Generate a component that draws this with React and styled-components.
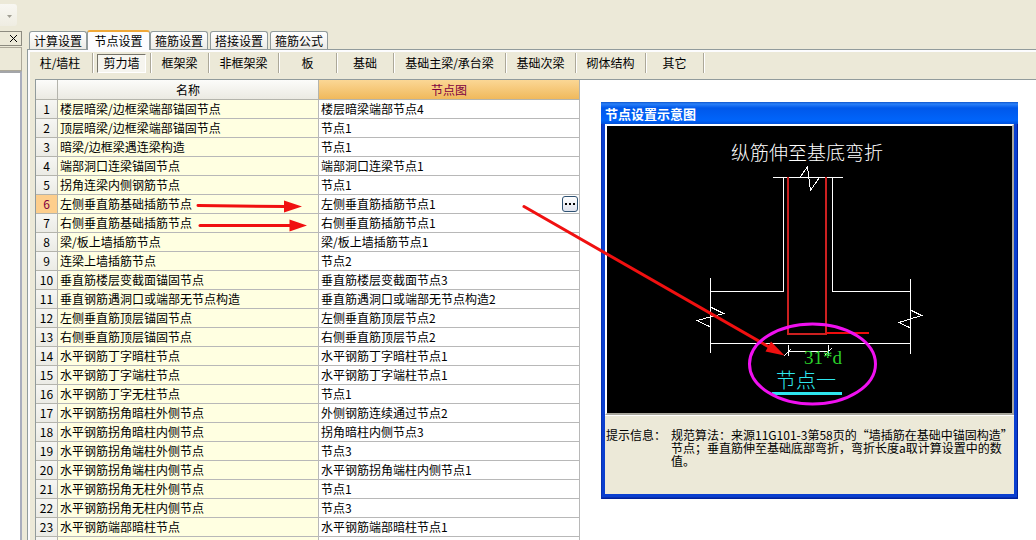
import { useState } from "react";
import styled, { createGlobalStyle } from "styled-components";

const GlobalStyle = createGlobalStyle`
  * {
    box-sizing: border-box;
  }

  body {
    margin: 0;
    background: #ece9d8;
    color: #000;
    font-family: "Noto Sans CJK SC", "Liberation Sans", sans-serif;
    font-size: 12px;
    line-height: 16px;
  }

  button {
    font: inherit;
    color: inherit;
    cursor: pointer;
  }
`;

const Page = styled.div`
  position: relative;
  display: flex;
  height: 100vh;
  overflow: hidden;
`;

const Dock = styled.aside`
  display: flex;
  flex-direction: column;
  flex: none;
  width: 22px;
`;

const ToolbarEnd = styled.button`
  width: 17px;
  height: 22px;
  margin: 4px 0 5px;
  padding: 0;
  border: none;
  border-radius: 0 3px 3px 0;
  background: linear-gradient(#f8f7f2, #efede2);
  line-height: 0;
`;

const DockTitle = styled.div`
  display: flex;
  justify-content: flex-end;
  align-items: center;
  height: 15px;
  border: 1px solid #8d8b80;
  border-left: none;
`;

const CloseButton = styled.button`
  display: flex;
  padding: 0 3px;
  border: none;
  background: none;
`;

const DockBar = styled.div`
  height: 24px;
  margin-top: 1px;
  border: 1px solid #aca899;
  border-left: none;
`;

const DockBody = styled.div`
  flex: 1;
  border-top: 2px solid #a3a5a9;
  border-right: 2px solid #a9adbd;
  background: #fff;
`;

const Main = styled.main`
  display: flex;
  flex-direction: column;
  flex: 1;
  min-width: 0;
  padding: 30px 0 0 5px;
`;

const TabBar = styled.div`
  display: flex;
  align-items: flex-end;
  height: 20px;
  padding-left: 2px;
  box-shadow: inset 0 -1px #919b9c;
`;

const Tab = styled.button`
  width: ${({ $active }) => ($active ? "63px" : "58px")};
  height: ${({ $active }) => ($active ? "20px" : "18px")};
  margin-bottom: ${({ $active }) => ($active ? "0" : "1px")};
  margin-right: ${({ $joined }) => ($joined ? "0" : "2px")};
  padding: 0;
  border: 1px solid #919b9c;
  border-top: ${({ $active }) => ($active ? "2px solid #f0a838" : "1px solid #919b9c")};
  border-bottom: none;
  border-radius: 3px 3px 0 0;
  background: ${({ $active }) => ($active ? "#fcfcfe" : "linear-gradient(#fff, #ecebe6)")};
  line-height: 16px;
  white-space: nowrap;
`;

const TabPanel = styled.section`
  display: flex;
  flex-direction: column;
  flex: 1;
  min-height: 0;
  border-left: 1px solid #919b9c;
  box-shadow: inset 2px 2px #fcfcfe;
`;

const SubTabBar = styled.div`
  display: flex;
  height: 29px;
  padding-top: 3px;
`;

const SubTabCell = styled.div`
  display: flex;
  justify-content: center;
  align-items: center;
  flex: none;
  width: ${({ $width }) => $width}px;
  height: 20px;
  border-right: 1px solid #aca899;
  box-shadow: 1px 0 #fff;
`;

const SubTab = styled.button`
  height: 19px;
  padding: 0 5px 2px;
  border: 1px solid;
  border-color: ${({ $active }) => ($active ? "#76746a #fff #fff #76746a" : "transparent")};
  background: ${({ $active }) => ($active ? "#f6f5ef" : "none")};
  line-height: 15px;
  white-space: nowrap;
`;

const Canvas = styled.div`
  display: flex;
  align-items: flex-start;
  flex: 1;
  min-height: 0;
  margin-left: 7px;
  border: solid #919b9c;
  border-width: 1px 0 0 1px;
  background: #fff;
  overflow: hidden;
`;

const Grid = styled.table`
  flex: none;
  width: 544px;
  border-collapse: separate;
  border-spacing: 0;
  table-layout: fixed;
`;

const HeadCell = styled.th`
  width: ${({ $width }) => $width}px;
  height: 20px;
  padding: 0;
  border: solid #b4b4ac;
  border-width: 0 1px 1px 0;
  background: ${({ $active }) =>
    $active ? "linear-gradient(#fbd795, #f0b95c)" : "linear-gradient(#fcfcfa, #ebeae2)"};
  color: ${({ $active }) => ($active ? "#800040" : "#000")};
  font-weight: 400;
`;

const NumberCell = styled.th`
  height: 19px;
  padding: 0;
  border: solid #b4b4ac;
  border-width: 0 1px 1px 0;
  background: ${({ $active }) => ($active ? "#fdce8c" : "linear-gradient(#f6f6f3, #ebebe5)")};
  color: ${({ $active }) => ($active ? "#800040" : "#000")};
  font-weight: 400;
`;

const Cell = styled.td`
  height: 19px;
  padding: 0 1px 0 2px;
  border: solid #b8b8b8;
  border-width: 0 1px 1px 0;
  background: ${({ $tinted }) => ($tinted ? "#ffffe1" : "#fff")};
  white-space: nowrap;
`;

const CellContent = styled.div`
  display: flex;
  justify-content: space-between;
  align-items: center;
  height: 18px;
`;

const MoreButton = styled.button`
  display: flex;
  justify-content: center;
  align-items: center;
  width: 16px;
  height: 16px;
  padding: 0;
  border: 1px solid #2f5273;
  border-radius: 3px;
  background: linear-gradient(#fff, #dfe3ee);
`;

const Dialog = styled.section`
  flex: none;
  width: 417px;
  margin: 22px 0 0 21px;
  padding: 0 4px 5px;
  border-radius: 1px;
  background: #0a3fd0;
  box-shadow: inset 1px 0 #0831b0, inset -1px -1px #00209a, inset 0 -2px #0831b0;
`;

const DialogTitle = styled.h2`
  height: 22px;
  margin: 0 -4px;
  padding: 0 4px;
  background: linear-gradient(#0f56cc, #2a80f8 2px, #0058ea 6px, #0064fa 18px, #0050dc);
  color: #fff;
  font-size: 13px;
  font-weight: 700;
  line-height: 23px;
`;

const DiagramFrame = styled.div`
  height: 291px;
  border: 2px solid #fff;
  border-right-color: #a8a69c;
  border-bottom-color: #a8a69c;
  background: #000;

  svg {
    display: block;
  }
`;

const Hint = styled.dl`
  display: flex;
  height: 79px;
  margin: 0;
  padding: 12px 0 0 1px;
  border-top: 1px solid #fff;
  background: #ece9d8;
  line-height: 13px;
  white-space: nowrap;

  dt {
    flex: none;
    width: 65px;
  }

  dd {
    margin: 0;
  }
`;

const Annotations = styled.svg`
  position: absolute;
  top: 0;
  left: 0;
  pointer-events: none;
`;

const tabs = ["计算设置", "节点设置", "箍筋设置", "搭接设置", "箍筋公式"];

const subTabs = [
  { label: "柱/墙柱", width: 65 },
  { label: "剪力墙", width: 58 },
  { label: "框架梁", width: 58 },
  { label: "非框架梁", width: 70 },
  { label: "板", width: 58 },
  { label: "基础", width: 57 },
  { label: "基础主梁/承台梁", width: 112 },
  { label: "基础次梁", width: 70 },
  { label: "砌体结构", width: 70 },
  { label: "其它", width: 58 },
];

const rows = [
  ["楼层暗梁/边框梁端部锚固节点", "楼层暗梁端部节点4"],
  ["顶层暗梁/边框梁端部锚固节点", "节点1"],
  ["暗梁/边框梁遇连梁构造", "节点1"],
  ["端部洞口连梁锚固节点", "端部洞口连梁节点1"],
  ["拐角连梁内侧钢筋节点", "节点1"],
  ["左侧垂直筋基础插筋节点", "左侧垂直筋插筋节点1"],
  ["右侧垂直筋基础插筋节点", "右侧垂直筋插筋节点1"],
  ["梁/板上墙插筋节点", "梁/板上墙插筋节点1"],
  ["连梁上墙插筋节点", "节点2"],
  ["垂直筋楼层变截面锚固节点", "垂直筋楼层变截面节点3"],
  ["垂直钢筋遇洞口或端部无节点构造", "垂直筋遇洞口或端部无节点构造2"],
  ["左侧垂直筋顶层锚固节点", "左侧垂直筋顶层节点2"],
  ["右侧垂直筋顶层锚固节点", "右侧垂直筋顶层节点2"],
  ["水平钢筋丁字暗柱节点", "水平钢筋丁字暗柱节点1"],
  ["水平钢筋丁字端柱节点", "水平钢筋丁字端柱节点1"],
  ["水平钢筋丁字无柱节点", "节点1"],
  ["水平钢筋拐角暗柱外侧节点", "外侧钢筋连续通过节点2"],
  ["水平钢筋拐角暗柱内侧节点", "拐角暗柱内侧节点3"],
  ["水平钢筋拐角端柱外侧节点", "节点3"],
  ["水平钢筋拐角端柱内侧节点", "水平钢筋拐角端柱内侧节点1"],
  ["水平钢筋拐角无柱外侧节点", "节点1"],
  ["水平钢筋拐角无柱内侧节点", "节点3"],
  ["水平钢筋端部暗柱节点", "水平钢筋端部暗柱节点1"],
  ["", ""],
];

const NodeDiagram = () => (
  <svg width="405" height="287" viewBox="0 0 405 287" role="img" aria-label="节点一">
    <text x="124" y="34" fill="#fff" fontSize="19" fontWeight="300">纵筋伸至基底弯折</text>
    <g fill="none" stroke="#fff" shapeRendering="crispEdges">
      <path d="M166 51.5H236" />
      <path d="M193 51.5L200.5 40.5L203.5 64.5L212 52" />
      <path d="M176.5 51V165.5H103" />
      <path d="M225.5 51V165.5H303" />
      <path d="M103.5 152V227M303.5 153V228M103 217.5H304" />
      <path d="M103.5 181L116.5 187.5L90 194.5L103.5 201" />
      <path d="M303.5 184L314.5 189.5L292 196.5L303.5 202" />
      <path d="M181.5 219V230M221.5 219V230M181 225.5H222M177 230L184 223M218 229L225 222" />
    </g>
    <g fill="none" stroke="#cc2020" strokeWidth="2">
      <path d="M181 51V208H219V51" />
      <path d="M219 207H262" stroke="#f00c0c" />
    </g>
    <text x="197" y="238" fill="#2bd02b" fontSize="19" fontFamily="Liberation Serif, serif">31*d</text>
    <text x="169" y="262" fill="#2ee6ee" fontSize="20" fontWeight="300">节点一</text>
    <rect x="165" y="266" width="70" height="3" fill="#2ee6ee" />
  </svg>
);

const App = () => {
  const [tab, setTab] = useState("节点设置");
  const [subTab, setSubTab] = useState("剪力墙");
  const selectedRow = 5;

  return (
    <Page lang="zh-CN">
      <GlobalStyle />
      <Dock>
        <ToolbarEnd aria-label="更多">
          <svg width="17" height="22" viewBox="0 0 17 22">
            <path d="M7 11H12L9.5 14Z" fill="#a19f94" />
          </svg>
        </ToolbarEnd>
        <DockTitle>
          <CloseButton aria-label="关闭">
            <svg width="9" height="9" viewBox="0 0 9 9" stroke="#000">
              <path d="M1 1L8 8M8 1L1 8" />
            </svg>
          </CloseButton>
        </DockTitle>
        <DockBar />
        <DockBody />
      </Dock>

      <Main>
        <TabBar role="tablist">
          {tabs.map((name, i) => (
            <Tab
              key={name}
              role="tab"
              aria-selected={name === tab}
              $active={name === tab}
              $joined={name === tab || tabs[i + 1] === tab}
              onClick={() => setTab(name)}
            >
              {name}
            </Tab>
          ))}
        </TabBar>

        <TabPanel>
          <SubTabBar>
            {subTabs.map(({ label, width }) => (
              <SubTabCell key={label} $width={width}>
                <SubTab
                  aria-pressed={label === subTab}
                  $active={label === subTab}
                  onClick={() => setSubTab(label)}
                >
                  {label}
                </SubTab>
              </SubTabCell>
            ))}
          </SubTabBar>

          <Canvas>
            <Grid>
              <thead>
                <tr>
                  <HeadCell $width={22} />
                  <HeadCell $width={261}>名称</HeadCell>
                  <HeadCell $width={261} $active>节点图</HeadCell>
                </tr>
              </thead>
              <tbody>
                {rows.map(([name, node], i) => (
                  <tr key={i}>
                    <NumberCell scope="row" $active={i === selectedRow}>{name && i + 1}</NumberCell>
                    <Cell $tinted>{name}</Cell>
                    <Cell>
                      <CellContent>
                        {node}
                        {i === selectedRow && (
                          <MoreButton aria-label="选择节点图">
                            <svg width="10" height="2" viewBox="0 0 10 2">
                              <path d="M0 0H2V2H0ZM4 0H6V2H4ZM8 0H10V2H8Z" />
                            </svg>
                          </MoreButton>
                        )}
                      </CellContent>
                    </Cell>
                  </tr>
                ))}
              </tbody>
            </Grid>

            <Dialog>
              <DialogTitle>节点设置示意图</DialogTitle>
              <DiagramFrame>
                <NodeDiagram />
              </DiagramFrame>
              <Hint>
                <dt>提示信息：</dt>
                <dd>
                  规范算法：来源11G101-3第58页的“墙插筋在基础中锚固构造”
                  <br />
                  节点；垂直筋伸至基础底部弯折，弯折长度a取计算设置中的数
                  <br />
                  值。
                </dd>
              </Hint>
            </Dialog>
          </Canvas>
        </TabPanel>
      </Main>

      <Annotations width="1036" height="540" viewBox="0 0 1036 540" aria-hidden="true">
        <g stroke="#f01010" strokeWidth="3" strokeLinecap="round">
          <path d="M198 205.5L286 206.5" />
          <path d="M200 225.5H292" />
          <path d="M524 206.5L770 347.5" />
        </g>
        <g fill="#f01010">
          <path d="M284 200.5L302 206.5L284 212.5Z" />
          <path d="M289.5 219.5L307 225.5L289.5 231.5Z" />
          <path d="M771 341.5L784.5 355.5L765.5 351.5Z" />
        </g>
        <ellipse cx="812.5" cy="364" rx="63" ry="40" fill="none" stroke="#f010f0" strokeWidth="3" />
      </Annotations>
    </Page>
  );
};

export default App;
